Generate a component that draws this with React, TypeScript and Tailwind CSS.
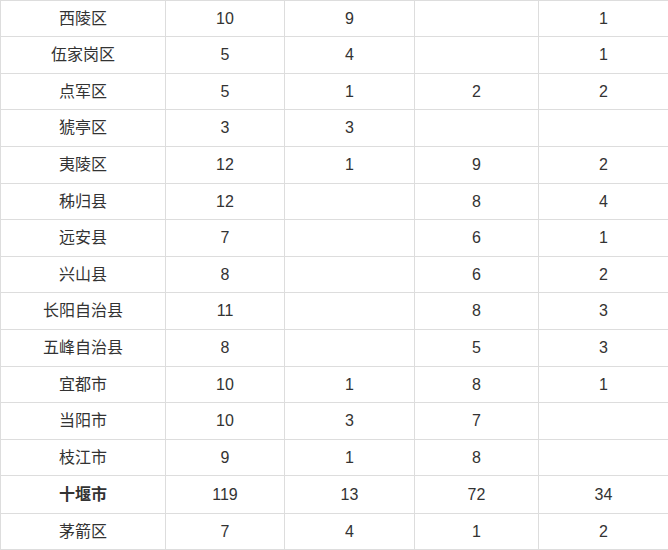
import React from "react"

interface Row {
  name: string
  total: string
  a: string
  b: string
  c: string
  h: string
  bold?: boolean
}

const rows: Row[] = [
  { name: "西陵区", total: "10", a: "9", b: "", c: "1", h: "h-[36px]" },
  { name: "伍家岗区", total: "5", a: "4", b: "", c: "1", h: "h-[37px]" },
  { name: "点军区", total: "5", a: "1", b: "2", c: "2", h: "h-[36px]" },
  { name: "猇亭区", total: "3", a: "3", b: "", c: "", h: "h-[37px]" },
  { name: "夷陵区", total: "12", a: "1", b: "9", c: "2", h: "h-[37px]" },
  { name: "秭归县", total: "12", a: "", b: "8", c: "4", h: "h-[36px]" },
  { name: "远安县", total: "7", a: "", b: "6", c: "1", h: "h-[37px]" },
  { name: "兴山县", total: "8", a: "", b: "6", c: "2", h: "h-[36px]" },
  { name: "长阳自治县", total: "11", a: "", b: "8", c: "3", h: "h-[37px]" },
  { name: "五峰自治县", total: "8", a: "", b: "5", c: "3", h: "h-[37px]" },
  { name: "宜都市", total: "10", a: "1", b: "8", c: "1", h: "h-[36px]" },
  { name: "当阳市", total: "10", a: "3", b: "7", c: "", h: "h-[37px]" },
  { name: "枝江市", total: "9", a: "1", b: "8", c: "", h: "h-[36px]" },
  { name: "十堰市", total: "119", a: "13", b: "72", c: "34", h: "h-[38px]", bold: true },
  { name: "茅箭区", total: "7", a: "4", b: "1", c: "2", h: "h-[37px] border-b" },
]

const cell = "flex items-center justify-center border-l border-[#dddddd]"

export default function App() {
  return (
    <div className="w-[668px] h-[550px] overflow-hidden bg-white text-[16px] text-[#333333] font-['Liberation_Sans','Noto_Sans_CJK_SC',sans-serif]">
      {rows.map((r) => (
        <div key={r.name} className={`flex border-t border-[#dddddd] ${r.h}`}>
          <div className={`${cell} w-[165px] ${r.bold ? "font-bold" : ""}`}>{r.name}</div>
          <div className={`${cell} w-[119px]`}>{r.total}</div>
          <div className={`${cell} w-[130px]`}>{r.a}</div>
          <div className={`${cell} w-[124px]`}>{r.b}</div>
          <div className={`${cell} w-[130px]`}>{r.c}</div>
        </div>
      ))}
    </div>
  )
}
